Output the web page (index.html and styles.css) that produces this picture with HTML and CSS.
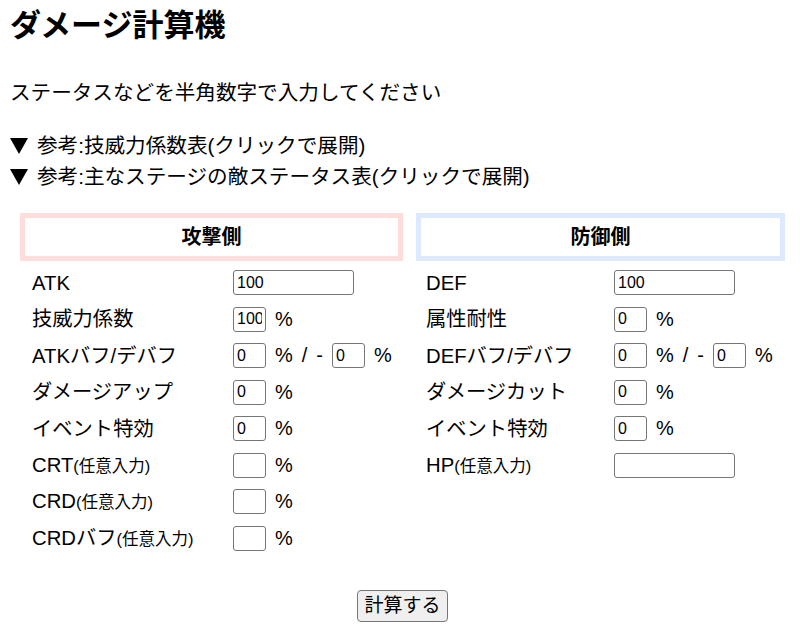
FILE: index.html
```html
<!DOCTYPE html>
<html lang="ja">
<head>
    <meta charset="UTF-8">
    <meta name="viewport" content="width=device-width, initial-scale=1.0">
    <title>ダメージ計算機</title>
    <link rel="stylesheet" href="styles.css">
</head>
<body>
    <h1>ダメージ計算機</h1>
    <p class="lead">ステータスなどを半角数字で入力してください</p>

    <!-- 参考表 -->
    <details class="ref">
        <summary><span class="arrow"></span>参考:技威力係数表(クリックで展開)</summary>
    </details>
    <details class="ref">
        <summary><span class="arrow"></span>参考:主なステージの敵ステータス表(クリックで展開)</summary>
    </details>

    <div class="container">
        <!-- 攻撃側 -->
        <div class="side side-atk">
            <div class="side-title">攻撃側</div>
            <div class="rows">
                <label>ATK</label>
                <div class="field"><input type="text" class="wide" value="100"></div>

                <label>技威力係数</label>
                <div class="field"><input type="text" class="num" value="100"><span>%</span></div>

                <label>ATKバフ/デバフ</label>
                <div class="field"><input type="text" class="num" value="0"><span>%</span><span>/</span><span>-</span><input type="text" class="num" value="0"><span>%</span></div>

                <label>ダメージアップ</label>
                <div class="field"><input type="text" class="num" value="0"><span>%</span></div>

                <label>イベント特効</label>
                <div class="field"><input type="text" class="num" value="0"><span>%</span></div>

                <label>CRT<small>(任意入力)</small></label>
                <div class="field"><input type="text" class="num"><span>%</span></div>

                <label>CRD<small>(任意入力)</small></label>
                <div class="field"><input type="text" class="num"><span>%</span></div>

                <label>CRDバフ<small>(任意入力)</small></label>
                <div class="field"><input type="text" class="num"><span>%</span></div>
            </div>
        </div>

        <!-- 防御側 -->
        <div class="side side-def">
            <div class="side-title">防御側</div>
            <div class="rows">
                <label>DEF</label>
                <div class="field"><input type="text" class="wide" value="100"></div>

                <label>属性耐性</label>
                <div class="field"><input type="text" class="num" value="0"><span>%</span></div>

                <label>DEFバフ/デバフ</label>
                <div class="field"><input type="text" class="num" value="0"><span>%</span><span>/</span><span>-</span><input type="text" class="num" value="0"><span>%</span></div>

                <label>ダメージカット</label>
                <div class="field"><input type="text" class="num" value="0"><span>%</span></div>

                <label>イベント特効</label>
                <div class="field"><input type="text" class="num" value="0"><span>%</span></div>

                <label>HP<small>(任意入力)</small></label>
                <div class="field"><input type="text" class="wide"></div>
            </div>
        </div>
    </div>

    <div class="actions">
        <button type="button">計算する</button>
    </div>
</body>
</html>
```

FILE: styles.css
```css
body {
    font-family: "Liberation Sans", "Noto Sans CJK JP", sans-serif;
    margin: 8px 10px;
    color: #000;
    background: #fff;
}
h1 {
    font-size: 31px;
    line-height: 36px;
    margin: 0;
    font-weight: bold;
}
.lead {
    font-size: 20.6px;
    line-height: 30px;
    margin: 34px 0 22px;
}
.ref summary {
    font-size: 20.6px;
    line-height: 31px;
    list-style: none;
    cursor: pointer;
}
.ref summary::-webkit-details-marker {
    display: none;
}
.arrow {
    display: inline-block;
    width: 0;
    height: 0;
    border-left: 9px solid transparent;
    border-right: 9px solid transparent;
    border-top: 16px solid #000;
    margin-right: 9px;
    vertical-align: -1px;
}
.container {
    display: flex;
    gap: 13px;
    margin: 21px 0 0 10px;
    width: 765px;
}
.side-atk {
    width: 383px;
}
.side-def {
    width: 369px;
}
.side-title {
    height: 38px;
    line-height: 38px;
    font-size: 20px;
    font-weight: bold;
    text-align: center;
    border: 5px solid #ffdddd;
}
.side-def .side-title {
    border-color: #dde9ff;
}
.rows {
    display: grid;
    grid-auto-rows: 36.5px;
    align-items: center;
    margin-top: 3.5px;
}
.side-atk .rows {
    grid-template-columns: 201px 1fr;
    padding-left: 12px;
}
.side-def .rows {
    grid-template-columns: 188px 1fr;
    padding-left: 10px;
}
.rows label {
    font-size: 20.3px;
    line-height: 26px;
    white-space: nowrap;
}
.rows label small {
    font-size: 16.5px;
}
.field {
    display: flex;
    align-items: center;
    gap: 9px;
    font-size: 20px;
}
.field input {
    font-family: "Liberation Sans", sans-serif;
    font-size: 16px;
    height: 25px;
    box-sizing: border-box;
    padding: 0 3px;
    border: 1px solid #767676;
    border-radius: 3px;
    margin: 0;
}
.field input.wide {
    width: 121px;
}
.field input.num {
    width: 33px;
}
.actions {
    width: 785px;
    text-align: center;
    margin-top: 33px;
}
.actions button {
    font-family: "Liberation Sans", "Noto Sans CJK JP", sans-serif;
    font-size: 19px;
    line-height: 24px;
    padding: 3px 6px;
    border: 1px solid #767676;
    border-radius: 4px;
    background: #efefef;
    color: #000;
}
```
